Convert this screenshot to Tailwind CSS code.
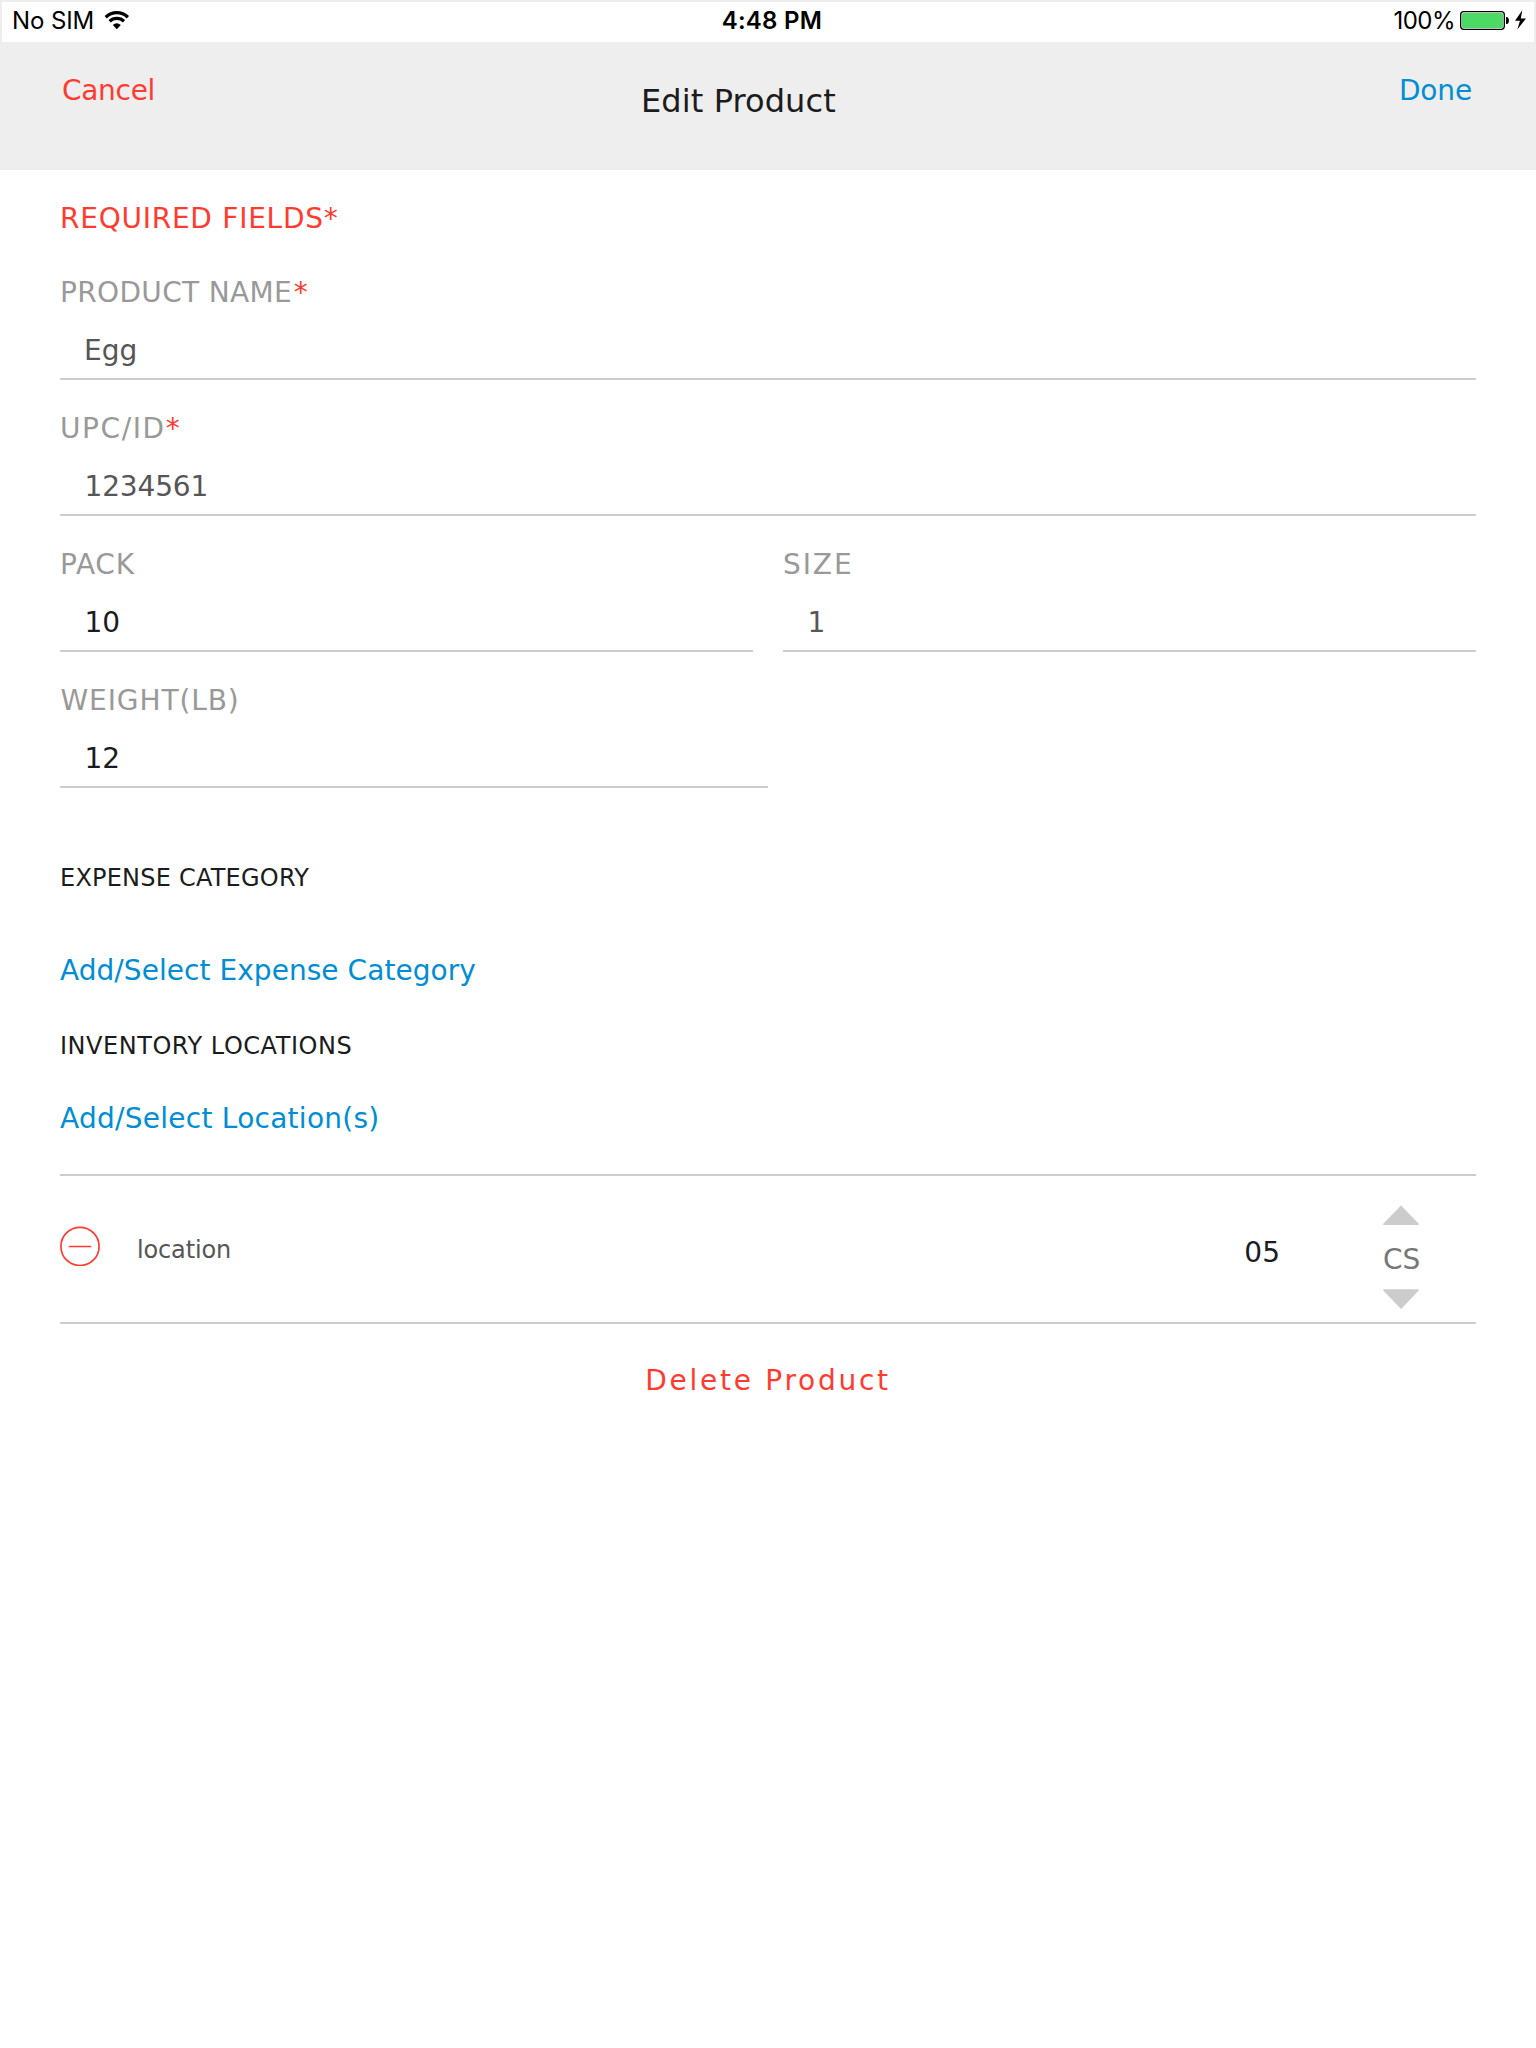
<!DOCTYPE html>
<html lang="en">
<head>
<meta charset="utf-8">
<title>Edit Product</title>
<script src="https://cdn.jsdelivr.net/npm/@tailwindcss/browser@4"></script>
</head>
<body class="min-h-screen bg-white font-['Verdana','DejaVu_Sans',sans-serif] text-[28px] leading-[36px] text-[#1b1c20]">
<header class="h-[170px] bg-[#eeeeee] pt-[2px]">
  <!-- Status bar -->
  <div class="mx-[2px] flex h-[40px] items-start bg-white pt-[4px] font-['Inter',sans-serif] text-[24px] leading-[30px] text-black">
    <span class="ml-[10px] tracking-[-0.1px] whitespace-nowrap">No SIM</span>
    <svg class="mt-[5px] ml-[9.5px] h-[19px] w-[26px] shrink-0" viewBox="0 0 26 19">
      <g fill="none" stroke="#000" stroke-width="3.3">
        <path d="M1.7 6.2Q6.5 1.7 12.8 1.7T23.9 6.2"/>
        <path d="M5.6 10.3Q8.6 7.4 12.8 7.4T20 10.3"/>
      </g>
      <path d="M8.8 14Q12.8 10.6 16.8 14L12.8 18.2Z"/>
    </svg>
    <span class="ml-[592px] font-semibold tracking-[0.25px] whitespace-nowrap">4:48 PM</span>
    <span class="ml-auto tracking-[-0.5px] whitespace-nowrap">100%</span>
    <svg class="mt-[4px] mr-[6px] ml-[5px] h-[21px] w-[68px] shrink-0" viewBox="1460 10 68 21">
      <rect x="1460.7" y="11.7" width="43.6" height="17.6" rx="3" fill="#fff" stroke="#000" stroke-width="1.3"/>
      <rect x="1462" y="13" width="41" height="15" rx="1.5" fill="#4cd964"/>
      <path d="M1506 17h1.2q1.8 1 1.8 3.5t-1.8 3.5H1506Z"/>
      <path d="M1522.3 10.3L1515 20.8h5L1517.3 29.6L1526 18.4h-5.2Z"/>
    </svg>
  </div>
  <div class="flex items-start whitespace-nowrap">
    <a class="mt-[31px] ml-[62px] w-[579px] tracking-[-0.3px] text-[#ff3b30]">Cancel</a>
    <h1 class="mt-[39px] text-[32px] leading-[40px] tracking-[0.1px]">Edit Product</h1>
    <a class="mt-[31px] mr-[64px] ml-auto tracking-[-0.15px] text-[#008dd5]">Done</a>
  </div>
</header>

<main class="mx-[60px] pt-[31px] whitespace-nowrap">
  <p class="mb-[7px] tracking-[0.75px] text-[#ff3b30]">REQUIRED FIELDS*</p>

  <div class="h-[136px] border-b-2 border-[#cccccc] pt-[31px]">
    <div class="text-[#999999]"><span class="tracking-[0.35px]">PRODUCT NAME</span><span class="ml-[1.5px] text-[#ff3b30]">*</span></div>
    <div class="mt-[22px] pl-[24px] text-[#565656]">Egg</div>
  </div>
  <div class="h-[136px] border-b-2 border-[#cccccc] pt-[31px]">
    <div class="text-[#999999]"><span class="tracking-[1.6px]">UPC/ID</span><span class="text-[#ff3b30]">*</span></div>
    <div class="mt-[22px] pl-[24.5px] tracking-[-0.15px] text-[#565656]">1234561</div>
  </div>
  <div class="flex gap-[30px]">
    <div class="h-[136px] flex-1 border-b-2 border-[#cccccc] pt-[31px]">
      <div class="tracking-[0.8px] text-[#999999]">PACK</div>
      <div class="mt-[22px] pl-[24.5px]">10</div>
    </div>
    <div class="h-[136px] flex-1 border-b-2 border-[#cccccc] pt-[31px]">
      <div class="tracking-[1.9px] text-[#999999]">SIZE</div>
      <div class="mt-[22px] pl-[24.5px] text-[#565656]">1</div>
    </div>
  </div>
  <div class="h-[136px] w-1/2 border-b-2 border-[#cccccc] pt-[31px]">
    <div class="pl-[0.5px] tracking-[0.9px] text-[#999999]">WEIGHT(LB)</div>
    <div class="mt-[22px] pl-[24.5px]">12</div>
  </div>

  <h2 class="mt-[75px] text-[24px] leading-[30px] tracking-[0.22px]">EXPENSE CATEGORY</h2>
  <a class="mt-[60px] block tracking-[0.05px] text-[#008dd5]">Add/Select Expense Category</a>
  <h2 class="mt-[42px] text-[24px] leading-[30px] tracking-[0.53px]">INVENTORY LOCATIONS</h2>
  <a class="mt-[40px] block tracking-[0.26px] text-[#008dd5]">Add/Select Location(s)</a>

  <div class="mt-[37px] flex h-[150px] items-start border-y-2 border-[#cccccc]">
    <svg class="mt-[50px] size-[40px] shrink-0" viewBox="0 0 40 40" fill="none" stroke="#ff3b30" stroke-width="1.7">
      <circle cx="20" cy="20.4" r="19.1"/>
      <path d="M9.5 20.5H30.5" stroke-linecap="round"/>
    </svg>
    <span class="mt-[59px] ml-[37px] text-[24px] leading-[30px] tracking-[-0.15px] text-[#565656]">location</span>
    <span class="mt-[59px] mr-[103px] ml-auto">05</span>
    <div class="mt-[29px] mr-[56px] flex w-[37px] flex-col items-start">
      <svg class="h-[20px] w-[36px]" viewBox="0 0 36 20"><path d="M18 0.5L36 19Q36 20 35 20H1Q0 20 0 19Z" fill="#cccccc"/></svg>
      <span class="mt-[17px] text-[#777777]">CS</span>
      <svg class="mt-[11px] h-[20px] w-[36px]" viewBox="0 0 36 20"><path d="M18 20L36 1.3Q36 0.3 35 0.3H1Q0 0.3 0 1.3Z" fill="#cccccc"/></svg>
    </div>
  </div>
  <a class="mt-[39px] block text-center tracking-[2.75px] text-[#ff3b30]">Delete Product</a>
</main>
</body>
</html>
